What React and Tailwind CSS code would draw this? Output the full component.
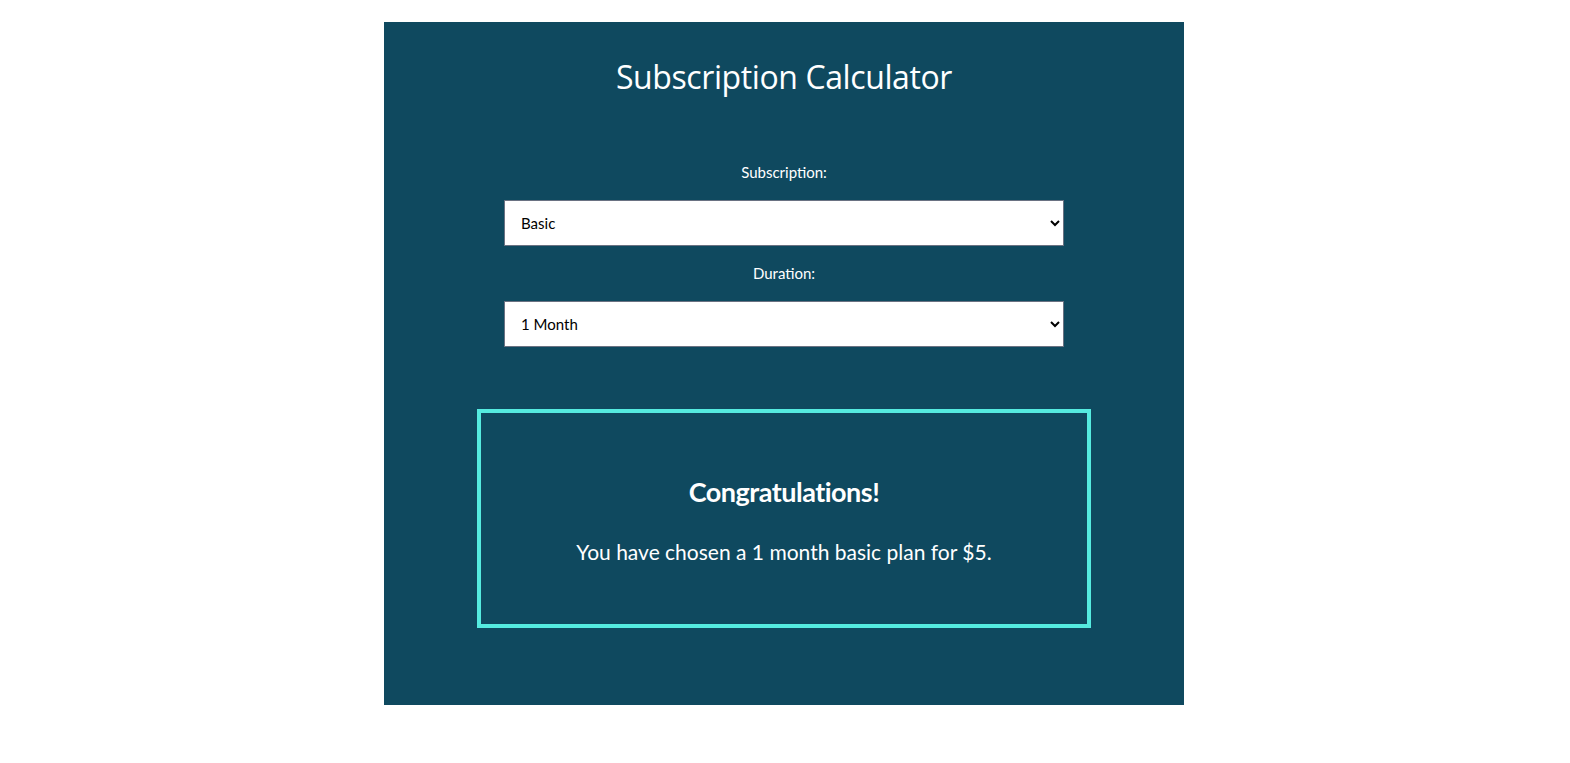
import React, { useState } from 'react';

const PRICES = { basic: 5, premium: 10, ultimate: 15 };

const App = () => {
  const [plan, setPlan] = useState('basic');
  const [months, setMonths] = useState(1);

  const total = PRICES[plan] * months;

  return (
    <div className="min-h-screen bg-white pt-[22px]" style={{ fontFamily: 'Lato, "Open Sans", sans-serif' }}>
      <div className="mx-auto w-[800px] h-[683px] bg-[#0f495f] text-white flex flex-col items-center -translate-x-px">
        {/* Header */}
        <h1
          className="mt-[35px] text-[32px] leading-[40px] font-normal tracking-[-0.4px]"
          style={{ fontFamily: '"Open Sans", Lato, sans-serif' }}
        >
          Subscription Calculator
        </h1>

        {/* Form */}
        <div className="mt-[65px] w-[560px] flex flex-col items-center">
          <label className="text-[15px] leading-[20px]" htmlFor="plan">
            Subscription:
          </label>
          <select
            id="plan"
            value={plan}
            onChange={e => setPlan(e.target.value)}
            className="mt-[18px] w-full h-[46px] bg-white text-black text-[15px] pl-[12px] pr-2 border border-gray-500"
          >
            <option value="basic">Basic</option>
            <option value="premium">Premium</option>
            <option value="ultimate">Ultimate</option>
          </select>

          <label className="mt-[17px] text-[15px] leading-[20px]" htmlFor="duration">
            Duration:
          </label>
          <select
            id="duration"
            value={months}
            onChange={e => setMonths(Number(e.target.value))}
            className="mt-[18px] w-full h-[46px] bg-white text-black text-[15px] pl-[12px] pr-2 border border-gray-500"
          >
            <option value={1}>1 Month</option>
            <option value={6}>6 Months</option>
            <option value={12}>12 Months</option>
          </select>
        </div>

        {/* Result */}
        <div className="mt-[62px] w-[614px] h-[219px] border-4 border-[#55ebe0] flex flex-col items-center pt-[63px]">
          <h2 className="text-[27px] leading-[32px] font-bold tracking-[-0.5px]">Congratulations!</h2>
          <p className="mt-[31px] text-[21px] leading-[26px]">
            You have chosen a {months} month {plan} plan for ${total}.
          </p>
        </div>
      </div>
    </div>
  );
};

export default App;
